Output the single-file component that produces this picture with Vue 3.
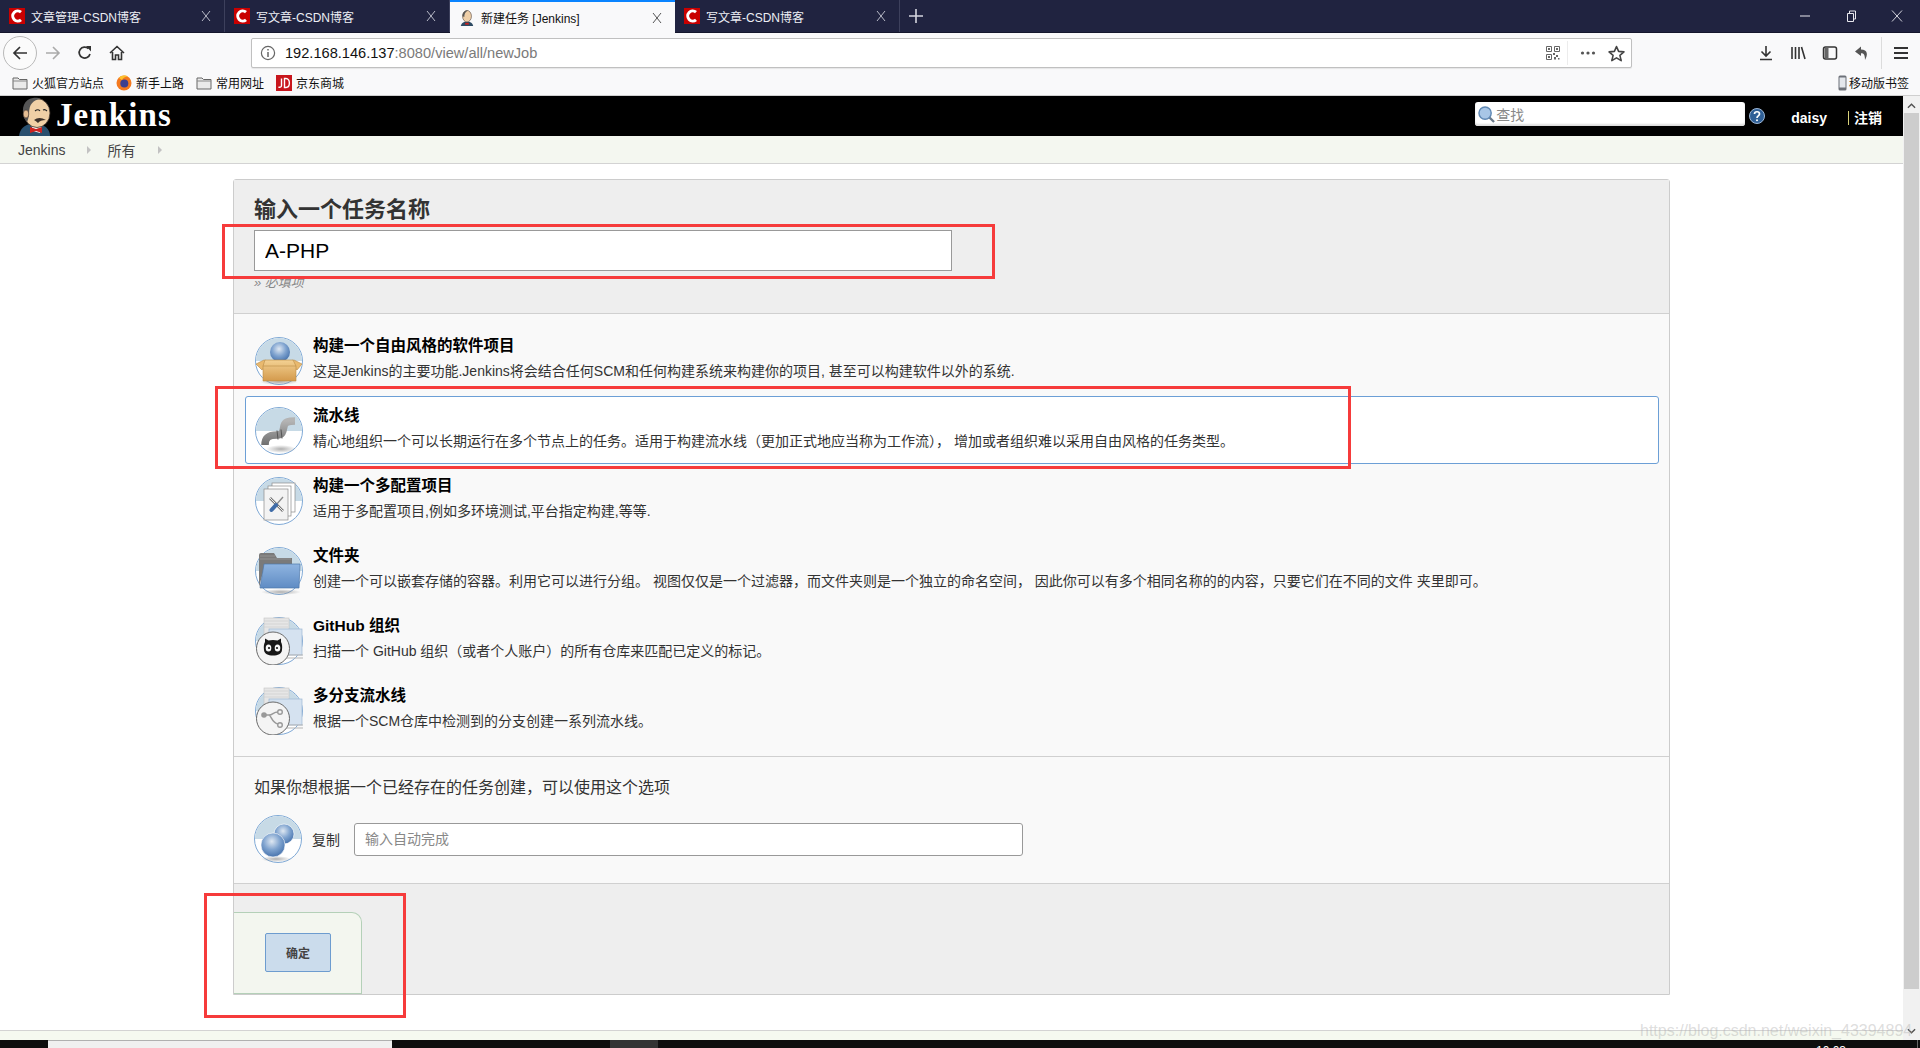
<script setup>
const tabs = [
  { title: "文章管理-CSDN博客", logo: "csdn" },
  { title: "写文章-CSDN博客", logo: "csdn" },
  { title: "新建任务 [Jenkins]", logo: "jenkins", active: true },
  { title: "写文章-CSDN博客", logo: "csdn" },
];

const bookmarks = [
  { label: "火狐官方站点", icon: "folder" },
  { label: "新手上路", icon: "firefox" },
  { label: "常用网址", icon: "folder" },
  { label: "京东商城", icon: "jd" },
];

const jobTypes = [
  {
    icon: "box",
    title: "构建一个自由风格的软件项目",
    desc: "这是Jenkins的主要功能.Jenkins将会结合任何SCM和任何构建系统来构建你的项目, 甚至可以构建软件以外的系统.",
  },
  {
    icon: "pipe",
    title: "流水线",
    desc: "精心地组织一个可以长期运行在多个节点上的任务。适用于构建流水线（更加正式地应当称为工作流）， 增加或者组织难以采用自由风格的任务类型。",
    selected: true,
  },
  {
    icon: "pages",
    title: "构建一个多配置项目",
    desc: "适用于多配置项目,例如多环境测试,平台指定构建,等等.",
  },
  {
    icon: "folder",
    title: "文件夹",
    desc: "创建一个可以嵌套存储的容器。利用它可以进行分组。 视图仅仅是一个过滤器，而文件夹则是一个独立的命名空间， 因此你可以有多个相同名称的的内容，只要它们在不同的文件 夹里即可。",
  },
  {
    icon: "github",
    title: "GitHub 组织",
    desc: "扫描一个 GitHub 组织（或者个人账户）的所有仓库来匹配已定义的标记。",
  },
  {
    icon: "branch",
    title: "多分支流水线",
    desc: "根据一个SCM仓库中检测到的分支创建一系列流水线。",
  },
];
</script>

<template>
  <div class="page">
    <svg class="defs" aria-hidden="true">
      <defs>
        <radialGradient id="ball" cx="45%" cy="35%" r="70%">
          <stop offset="0" stop-color="#dfe8f2" />
          <stop offset="0.5" stop-color="#7fa3cf" />
          <stop offset="1" stop-color="#3f6ca8" />
        </radialGradient>
        <linearGradient id="boxFront" x1="0" y1="0" x2="0" y2="1">
          <stop offset="0" stop-color="#f3d193" />
          <stop offset="1" stop-color="#d49a4c" />
        </linearGradient>
        <linearGradient id="pipeGrey" x1="0" y1="0" x2="0" y2="1">
          <stop offset="0" stop-color="#b4b4b4" />
          <stop offset="1" stop-color="#6f6f6f" />
        </linearGradient>
        <linearGradient id="folderBlue" x1="0" y1="0" x2="0" y2="1">
          <stop offset="0" stop-color="#8fb4e0" />
          <stop offset="1" stop-color="#5f8cc4" />
        </linearGradient>
        <radialGradient id="floorShade" cx="50%" cy="50%" r="50%">
          <stop offset="0" stop-color="#8c8c8c" stop-opacity="0.7" />
          <stop offset="1" stop-color="#8c8c8c" stop-opacity="0" />
        </radialGradient>
      </defs>
    </svg>

    <div class="tabstrip">
      <div
        v-for="(tab, i) in tabs"
        :key="i"
        class="tab"
        :class="{ active: tab.active }"
      >
        <svg v-if="tab.logo === 'csdn'" class="tab-icon" viewBox="0 0 16 16">
          <rect width="16" height="16" fill="#c90000" />
          <path d="M12 4.2 A5 5 0 1 0 12 11.8" fill="none" stroke="#fff" stroke-width="3" />
        </svg>
        <svg v-else class="tab-icon" viewBox="0 0 16 18">
          <path d="M1 18 C2 14 5 13 8 13 C11 13 14 14 15 18 Z" fill="#2d4a63" />
          <ellipse cx="8" cy="7" rx="5" ry="6.5" fill="#efcfa8" stroke="#5a4a40" stroke-width="0.7" />
          <path d="M3 7 C3 2 6 0.5 9 0.5 C7 2 5 3 5 8 Z" fill="#555" />
          <path d="M6 14.5 L10 14.5 L10 16.5 L6 16.5 Z" fill="#c8201c" />
        </svg>
        <span class="tab-title">{{ tab.title }}</span>
        <svg class="tab-close" viewBox="0 0 10 12">
          <path d="M1 1 L9 11 M9 1 L1 11" fill="none" stroke="currentColor" stroke-width="1" />
        </svg>
      </div>
      <svg class="new-tab" viewBox="0 0 14 14">
        <path d="M7 0 V14 M0 7 H14" stroke="#d4d5de" stroke-width="1.6" />
      </svg>
      <div class="window-btns">
        <svg viewBox="0 0 12 12"><path d="M1 6 H11" stroke="#e8e8ee" stroke-width="1" /></svg>
        <svg viewBox="0 0 12 12"><path d="M2.5 3.5 H8.5 V11.5 H2.5 Z M4.5 3.5 V1 H10.5 V9 H8.5" fill="none" stroke="#e8e8ee" stroke-width="1" /></svg>
        <svg viewBox="0 0 12 12"><path d="M1 0.5 L11 11.5 M11 0.5 L1 11.5" fill="none" stroke="#e8e8ee" stroke-width="0.9" /></svg>
      </div>
    </div>

    <div class="toolbar">
      <div class="back-btn">
        <svg viewBox="0 0 16 16" width="16" height="16">
          <path d="M15 8 H2 M8 2 L2 8 L8 14" fill="none" stroke="#333" stroke-width="1.7" />
        </svg>
      </div>
      <div class="tool-btn">
        <svg viewBox="0 0 16 16" width="16" height="16">
          <path d="M1 8 H14 M8 2 L14 8 L8 14" fill="none" stroke="#aaa" stroke-width="1.6" />
        </svg>
      </div>
      <div class="tool-btn">
        <svg viewBox="0 0 16 16" width="16" height="16">
          <path d="M13 9 A5.5 5.5 0 1 1 11.5 3.6" fill="none" stroke="#333" stroke-width="1.7" />
          <path d="M9 1 H14 V6.5 Z" fill="#333" />
        </svg>
      </div>
      <div class="tool-btn">
        <svg viewBox="0 0 16 16" width="16" height="16">
          <path d="M1 8 L8 1.5 L15 8 M3.5 7 V14.5 H6.5 V10 H9.5 V14.5 H12.5 V7" fill="none" stroke="#333" stroke-width="1.6" />
        </svg>
      </div>

      <div class="urlbar">
        <svg class="info-icon" viewBox="0 0 16 16">
          <circle cx="8" cy="8" r="6.6" fill="none" stroke="#666" stroke-width="1.2" />
          <path d="M8 7 V12 M8 4 V5.5" stroke="#666" stroke-width="1.5" />
        </svg>
        <span class="url-text"><span class="url-host">192.168.146.137</span>:8080/view/all/newJob</span>
        <svg class="qr-icon" viewBox="0 0 14 14">
          <path d="M0.5 0.5 H5.5 V5.5 H0.5 Z M8.5 0.5 H13.5 V5.5 H8.5 Z M0.5 8.5 H5.5 V13.5 H0.5 Z" fill="none" stroke="#666" />
          <path d="M2 2 H4 V4 H2 Z M10 2 H12 V4 H10 Z M2 10 H4 V12 H2 Z M7 7 H9 V9 H7 Z M10 9 H12 V11 H10 Z M8 11 H10 V13.5 H8 Z M12 12 H13.5 V13.5 H12 Z" fill="#666" />
        </svg>
        <span class="url-divider"></span>
        <svg class="dots-icon" viewBox="0 0 16 4">
          <circle cx="2.5" cy="2" r="1.6" fill="#555" />
          <circle cx="8" cy="2" r="1.6" fill="#555" />
          <circle cx="13.5" cy="2" r="1.6" fill="#555" />
        </svg>
        <svg class="star-icon" viewBox="0 0 16 16">
          <path d="M8 1.5 L10 6 L15 6.5 L11.2 9.8 L12.4 14.7 L8 12.1 L3.6 14.7 L4.8 9.8 L1 6.5 L6 6 Z" fill="none" stroke="#444" stroke-width="1.5" stroke-linejoin="round" />
        </svg>
      </div>

      <div class="toolbar-right">
        <div class="tool-btn">
          <svg viewBox="0 0 16 16" width="16" height="16">
            <path d="M8 1 V11 M3.5 6.5 L8 11 L12.5 6.5 M2 14.5 H14" fill="none" stroke="#333" stroke-width="1.6" />
          </svg>
        </div>
        <div class="tool-btn">
          <svg viewBox="0 0 16 16" width="16" height="16">
            <path d="M2 2 V14 M5.5 2 V14 M9 2 V14 M11.5 2 L15 14" fill="none" stroke="#333" stroke-width="1.6" />
          </svg>
        </div>
        <div class="tool-btn">
          <svg viewBox="0 0 16 16" width="16" height="16">
            <rect x="1.5" y="2" width="13" height="12" rx="2" fill="none" stroke="#333" stroke-width="1.5" />
            <rect x="2.5" y="3" width="4" height="10" fill="#666" />
          </svg>
        </div>
        <div class="tool-btn">
          <svg viewBox="0 0 16 16" width="16" height="16">
            <path d="M7 1.5 L1 6.5 L7 11 V8.2 C10 8.2 11 10 11 15 C14 10 14 4.5 7 4.5 Z" fill="#555" />
          </svg>
        </div>
        <span class="tool-divider"></span>
        <div class="tool-btn">
          <svg viewBox="0 0 14 14" width="14" height="14">
            <path d="M0 2 H14 M0 7 H14 M0 12 H14" stroke="#333" stroke-width="1.8" />
          </svg>
        </div>
      </div>
    </div>

    <div class="bookmarks">
      <div v-for="b in bookmarks" :key="b.label" class="bookmark">
        <svg v-if="b.icon === 'folder'" class="bm-icon" viewBox="0 0 16 16">
          <path d="M1 3 H6 L7.5 4.5 H15 V14 H1 Z" fill="#eaeaea" stroke="#666" stroke-width="1" />
          <path d="M1 6 H15" stroke="#888" />
        </svg>
        <svg v-else-if="b.icon === 'firefox'" class="bm-icon" viewBox="0 0 16 16">
          <circle cx="8" cy="8" r="7.5" fill="#f4791f" />
          <circle cx="8.3" cy="8.6" r="4" fill="#3c3f90" />
          <path d="M3 3 C5 0 10 0 12 1.5 C9 1.5 7 3 6 5 Z" fill="#fcc32c" />
        </svg>
        <svg v-else class="bm-icon" viewBox="0 0 16 16">
          <rect width="16" height="16" fill="#c8161d" />
          <path d="M5.5 3.5 V10.5 C5.5 12.5 3.5 12.5 2.5 12 M8.5 3.5 V12.5 H10 C14.5 12.5 14.5 3.5 10 3.5 Z" fill="none" stroke="#fff" stroke-width="1.4" />
        </svg>
        <span>{{ b.label }}</span>
      </div>
      <div class="bookmark mobile">
        <svg class="bm-phone" viewBox="0 0 9 16">
          <rect x="0.5" y="0.5" width="8" height="15" rx="1.5" fill="#6d7178" />
          <rect x="1.5" y="2.5" width="6" height="10" fill="#e4e7ec" />
        </svg>
        <span>移动版书签</span>
      </div>
    </div>

    <div class="browser-body">
      <div class="viewport">
        <header class="jenkins-header">
          <svg class="butler" viewBox="0 0 34 40">
            <path d="M1 40 C2 32 7 29 12 28 L26 30 C30 32 32 36 32 40 Z" fill="#29506e" />
            <path d="M13 28 L24 30 L22 37 L15 35 Z" fill="#fff" />
            <path d="M12 31 L18 33 L24 31 L24 37 L18 35 L12 37 Z" fill="#cc2320" />
            <ellipse cx="19" cy="17" rx="13" ry="14.5" fill="#f0d0a6" stroke="#3a2e28" stroke-width="0.8" />
            <path d="M6 22 C3 12 6 3 15 2 C18 1.5 21 2 23 3 C15 4 11 8 11 18 C11 20 10 24 9 26 Z" fill="#555" />
            <ellipse cx="8" cy="18" rx="2.8" ry="4" fill="#e4bd92" stroke="#3a2e28" stroke-width="0.6" />
            <path d="M17 15 Q20 12.5 22 15 M25 14 Q27 13 29 15" fill="none" stroke="#222" stroke-width="1.1" />
            <path d="M16 24 Q21 20 28 24 Q22 24 20 27 Q18 25 16 24 Z" fill="#3b3029" />
          </svg>
          <span class="wordmark">Jenkins</span>
          <div class="header-right">
            <div class="search-box">
              <svg class="search-icon" viewBox="0 0 18 18">
                <path d="M12 12 L17 17" stroke="#6b7a8a" stroke-width="2.4" />
                <circle cx="7.5" cy="7.5" r="6.5" fill="#a8c6e6" stroke="#5f88b4" stroke-width="1.5" />
              </svg>
              <span class="search-placeholder">查找</span>
            </div>
            <svg class="help-icon" viewBox="0 0 16 16">
              <circle cx="8" cy="8" r="7.5" fill="#2f5f96" stroke="#9db7d6" />
              <path d="M5.5 6 C5.5 3 10.5 3 10.5 6 C10.5 8 8 7.8 8 10" fill="none" stroke="#fff" stroke-width="1.7" />
              <circle cx="8" cy="12.3" r="1" fill="#fff" />
            </svg>
            <span class="user-name">daisy</span>
            <span class="logout">注销</span>
          </div>
        </header>

        <nav class="breadcrumb">
          <span>Jenkins</span>
          <i class="crumb-arrow first"></i>
          <span>所有</span>
          <i class="crumb-arrow second"></i>
        </nav>

        <main class="main">
          <section class="panel">
            <div class="name-block">
              <h2 class="name-label">输入一个任务名称</h2>
              <input class="name-input" type="text" value="A-PHP" />
              <div class="name-hint">» 必填项</div>
            </div>

            <ul class="job-list">
              <li
                v-for="job in jobTypes"
                :key="job.icon"
                class="job-item"
                :class="{ selected: job.selected }"
              >
                <svg class="job-icon" viewBox="0 0 48 48">
                  <template v-if="job.icon === 'box'">
                    <circle cx="24" cy="24" r="23.5" fill="#fff" stroke="#7fa9d6" />
                    <path d="M1 24 A23 23 0 0 1 47 24 Z" fill="#c7dae6" />
                    <ellipse cx="24" cy="45" rx="19" ry="3" fill="url(#floorShade)" />
                    <circle cx="25" cy="15" r="10" fill="url(#ball)" />
                    <path d="M9 23 L1 27 L7 33 L14 24 Z M39 23 L47 27 L42 33 L34 24 Z" fill="#e9b96e" stroke="#b98a45" stroke-width="0.6" />
                    <path d="M10 23 H38 L41 29 V44 H8 V29 Z" fill="url(#boxFront)" stroke="#b98a45" stroke-width="0.6" />
                    <path d="M8 29 H41" stroke="#b98a45" stroke-width="0.6" />
                  </template>
                  <template v-else-if="job.icon === 'pipe'">
                    <circle cx="24" cy="24" r="23.5" fill="#fff" stroke="#7fa9d6" />
                    <path d="M1 24 A23 23 0 0 1 47 24 Z" fill="#c7dae6" />
                    <ellipse cx="26" cy="42" rx="15" ry="4" fill="url(#floorShade)" />
                    <path d="M10 38 C10 30 14 28 22 28 C28 28 28 24 29 19 C30 15 33 14 40 14" fill="none" stroke="url(#pipeGrey)" stroke-width="7.5" />
                    <path d="M22 23.5 L23 32.5 M26 22.5 L27 31.5" stroke="#555" stroke-width="1" />
                  </template>
                  <template v-else-if="job.icon === 'pages'">
                    <circle cx="24" cy="24" r="23.5" fill="#fff" stroke="#7fa9d6" />
                    <path d="M1 24 A23 23 0 0 1 47 24 Z" fill="#c7dae6" />
                    <rect x="17" y="6" width="23" height="29" fill="#fff" stroke="#8a8a8a" stroke-width="0.7" />
                    <rect x="13" y="9" width="23" height="30" fill="#fff" stroke="#8a8a8a" stroke-width="0.7" />
                    <rect x="9" y="12" width="24" height="31" fill="#f3f3f3" stroke="#8a8a8a" stroke-width="0.7" />
                    <path d="M15 21 L28 34" stroke="#777" stroke-width="2.6" />
                    <path d="M15 21 L28 34" stroke="#eee" stroke-width="1" />
                    <path d="M28 20 L21 28" stroke="#8a8a8a" stroke-width="1.4" />
                    <path d="M21 28 L16.5 33" stroke="#3f6ca8" stroke-width="4" stroke-linecap="round" />
                  </template>
                  <template v-else-if="job.icon === 'folder'">
                    <circle cx="24" cy="24" r="23.5" fill="#fff" stroke="#7fa9d6" />
                    <path d="M1 24 A23 23 0 0 1 47 24 Z" fill="#c7dae6" />
                    <ellipse cx="26" cy="45" rx="20" ry="3" fill="url(#floorShade)" />
                    <path d="M4 40 V8 Q4 6 6 6 H19 L22 11 H37 V18 H10 Z" fill="#7a7a7a" />
                    <path d="M5 9 H20 M5 12 H36" stroke="#9b9b9b" stroke-width="0.8" />
                    <path d="M9 17 H45 L44 41 H5 Z" fill="url(#folderBlue)" stroke="#4f78ab" stroke-width="0.7" />
                  </template>
                  <template v-else>
                    <circle cx="24" cy="24" r="23.5" fill="#fff" stroke="#7fa9d6" />
                    <path d="M1 24 A23 23 0 0 1 47 24 Z" fill="#c7dae6" />
                    <rect x="9" y="1" width="25" height="22" fill="#e6e6e6" stroke="#c4c4c4" stroke-width="0.6" />
                    <path d="M9 4 H33 M9 7 H33 M9 10 H33" stroke="#cfcfcf" stroke-width="0.8" />
                    <rect x="14" y="12" width="33" height="26" fill="#d5e2f0" stroke="#9db7d3" stroke-width="0.7" />
                    <path d="M30 38 H48 M30 41 H48" stroke="#b5b5b5" stroke-width="1.2" />
                    <circle cx="18" cy="31.5" r="16.5" fill="#f4f4f4" stroke="#6a6a6a" stroke-width="1" />
                    <template v-if="job.icon === 'github'">
                      <path d="M9 33 C8.500 29 9 27 10 25 L10 21.500 L13.500 23.500 C16 22.800 20 22.800 22.500 23.500 L26 21.500 L26 25 C27 27 27.500 29 27 33 C26.500 37 23 38.500 18 38.500 C13 38.500 9.500 37 9 33 Z" fill="#161616" />
                      <ellipse cx="13.500" cy="31" rx="2.800" ry="3.500" fill="#f4f4f4" />
                      <ellipse cx="22.500" cy="31" rx="2.800" ry="3.500" fill="#f4f4f4" />
                      <circle cx="14" cy="31" r="1.100" fill="#161616" />
                      <circle cx="22" cy="31" r="1.100" fill="#161616" />
                    </template>
                    <template v-else>
                      <circle cx="9" cy="28" r="2.800" fill="#999" />
                      <circle cx="25" cy="25" r="2.300" fill="none" stroke="#999" stroke-width="1.400" />
                      <circle cx="25" cy="38" r="2.300" fill="none" stroke="#999" stroke-width="1.400" />
                      <path d="M9 28 H14 C18 28 18 25 23 25 M14 28 C17 30 17 36 23 37" fill="none" stroke="#999" stroke-width="1.500" />
                    </template>
                  </template>
                </svg>
                <div class="job-text">
                  <div class="job-title">{{ job.title }}</div>
                  <div class="job-desc">{{ job.desc }}</div>
                </div>
              </li>
            </ul>

            <div class="copy-block">
              <div class="copy-hint">如果你想根据一个已经存在的任务创建，可以使用这个选项</div>
              <div class="copy-row">
                <svg class="job-icon" viewBox="0 0 48 48">
                  <circle cx="24" cy="24" r="23.5" fill="#fff" stroke="#7fa9d6" />
                  <path d="M1 24 A23 23 0 0 1 47 24 Z" fill="#c7dae6" />
                  <ellipse cx="22" cy="44" rx="15" ry="3" fill="url(#floorShade)" />
                  <circle cx="30" cy="19" r="10" fill="url(#ball)" stroke="#fff" stroke-width="0.6" />
                  <circle cx="19" cy="30" r="12" fill="url(#ball)" stroke="#fff" stroke-width="0.6" />
                </svg>
                <span class="copy-label">复制</span>
                <input class="copy-input" type="text" placeholder="输入自动完成" />
              </div>
            </div>

            <div class="footer-block">
              <div class="ok-tab">
                <button class="ok-btn" type="button">确定</button>
              </div>
            </div>
          </section>
        </main>

        <footer class="page-footer"></footer>
      </div>

      <aside class="scrollbar">
        <svg class="scroll-arrow" viewBox="0 0 10 6">
          <path d="M1 5 L5 1 L9 5" fill="none" stroke="#505050" stroke-width="1.5" />
        </svg>
        <div class="scroll-thumb"></div>
        <svg class="scroll-arrow down" viewBox="0 0 10 6">
          <path d="M1 1 L5 5 L9 1" fill="none" stroke="#505050" stroke-width="1.5" />
        </svg>
      </aside>
    </div>

    <div class="taskbar">
      <div class="task-search"></div>
      <div class="task-item"></div>
      <span class="task-clock">10:03</span>
      <span class="task-edge"></span>
    </div>

    <!-- hand drawn annotations sitting on top of the screenshot -->
    <div class="mark mark-name"></div>
    <div class="mark mark-pipeline"></div>
    <div class="mark mark-ok"></div>
    <div class="watermark">https://blog.csdn.net/weixin_43394894</div>
  </div>
</template>

<style>
html,
body {
  margin: 0;
  overflow: hidden;
}
</style>

<style scoped>
* {
  box-sizing: border-box;
}

.page {
  position: relative;
  display: flex;
  flex-direction: column;
  width: 1920px;
  height: 1048px;
  overflow: hidden;
  background: #fff;
  font-family: "Liberation Sans", "Noto Sans CJK SC", sans-serif;
  color: #333;
}

.defs {
  position: absolute;
  width: 0;
  height: 0;
}

/* browser chrome */
.tabstrip {
  display: flex;
  align-items: stretch;
  flex: none;
  height: 33px;
  background: #202340;
  border-bottom: 1px solid #14162c;
}

.tab {
  display: flex;
  align-items: center;
  width: 225px;
  padding: 0 10px 0 9px;
  border-right: 1px solid #3d405c;
  color: #eceef4;
  font-size: 12px;
}

.tab.active {
  height: 33px;
  background: #f9f9fa;
  border-top: 2px solid #0a84ff;
  border-right: none;
  color: #111;
}

.tab-icon {
  flex: none;
  width: 16px;
  height: 16px;
}

.tab-title {
  flex: 1;
  margin-left: 6px;
}

.tab-close {
  flex: none;
  width: 10px;
  height: 12px;
  margin-right: 3px;
  color: #b9bbc8;
}

.tab.active .tab-close {
  color: #555;
}

.new-tab {
  width: 14px;
  height: 14px;
  margin: 9px 0 0 9px;
}

.window-btns {
  display: flex;
  gap: 34px;
  align-items: center;
  margin-left: auto;
  padding-right: 17px;
}

.window-btns svg {
  width: 12px;
  height: 12px;
}

.toolbar {
  display: flex;
  align-items: center;
  flex: none;
  height: 37px;
  padding: 3px 0 0 3px;
  background: #f9f9fa;
}

.back-btn {
  display: flex;
  align-items: center;
  justify-content: center;
  width: 34px;
  height: 34px;
  background: #fbfbfb;
  border: 1px solid #b9b9b9;
  border-radius: 50%;
}

.tool-btn {
  display: flex;
  align-items: center;
  justify-content: center;
  flex: none;
  width: 32px;
  height: 32px;
}

.urlbar {
  display: flex;
  align-items: center;
  width: 1381px;
  height: 30px;
  margin-left: 118px;
  padding: 0 6px 0 8px;
  background: #fff;
  border: 1px solid #c0c0c0;
  border-radius: 2px;
  box-shadow: 0 1px 1px rgba(0, 0, 0, 0.08);
}

.info-icon {
  width: 16px;
  height: 16px;
}

.url-text {
  margin-left: 9px;
  color: #7a7a7a;
  font-size: 14.6px;
}

.url-host {
  color: #111;
}

.qr-icon {
  width: 14px;
  height: 14px;
  margin-left: auto;
}

.url-divider {
  width: 1px;
  height: 24px;
  margin-left: 7px;
  background: #ececec;
}

.dots-icon {
  width: 16px;
  height: 4px;
  margin-left: 12px;
}

.star-icon {
  width: 17px;
  height: 17px;
  margin-left: 12px;
}

.toolbar-right {
  display: flex;
  align-items: center;
  margin-left: 118px;
}

.tool-divider {
  width: 1px;
  height: 32px;
  margin: 0 3px;
  background: #dcdcdc;
}

.bookmarks {
  display: flex;
  align-items: center;
  flex: none;
  gap: 12px;
  height: 26px;
  padding: 0 11px 0 12px;
  background: #f9f9fa;
  border-bottom: 1px solid #cfcfcf;
  color: #111;
  font-size: 12px;
}

.bookmark {
  display: flex;
  align-items: center;
  gap: 4px;
}

.bookmark.mobile {
  margin-left: auto;
  gap: 2px;
}

.bm-icon {
  width: 16px;
  height: 16px;
}

.bm-phone {
  width: 9px;
  height: 16px;
}

.browser-body {
  display: flex;
  flex: 1;
  min-height: 0;
}

.viewport {
  display: flex;
  flex-direction: column;
  flex: 1;
  min-width: 0;
}

/* jenkins header */
.jenkins-header {
  display: flex;
  align-items: center;
  flex: none;
  height: 40px;
  padding-left: 18px;
  background: #000;
  color: #fff;
}

.butler {
  flex: none;
  width: 34px;
  height: 40px;
}

.wordmark {
  margin: 0 0 2px 4px;
  font-family: "Liberation Serif", serif;
  font-size: 33px;
  font-weight: 700;
  letter-spacing: 1.1px;
}

.header-right {
  display: flex;
  align-items: center;
  margin-left: auto;
  padding-right: 21px;
}

.search-box {
  display: flex;
  align-items: center;
  width: 270px;
  height: 24px;
  margin-bottom: 4px;
  padding-left: 3px;
  background: #fff;
  border-radius: 3px;
  box-shadow: inset 0 -2px 2px #ddd;
}

.search-icon {
  width: 17px;
  height: 17px;
}

.search-placeholder {
  margin-left: 1px;
  color: #888;
  font-size: 14px;
}

.help-icon {
  width: 16px;
  height: 16px;
  margin-left: 4px;
}

.user-name {
  margin: 4px 0 0 26px;
  font-size: 14px;
  font-weight: 700;
}

.logout {
  margin: 4px 0 0 21px;
  padding-left: 5px;
  border-left: 1px solid #d8d27a;
  font-size: 14px;
  font-weight: 700;
  line-height: 14px;
}

.breadcrumb {
  display: flex;
  align-items: center;
  flex: none;
  height: 28px;
  padding-left: 18px;
  background: #f4f7f0;
  border-bottom: 1px solid #d3d3d3;
  color: #444;
  font-size: 14px;
}

.crumb-arrow {
  width: 0;
  height: 0;
  border-top: 4px solid transparent;
  border-bottom: 4px solid transparent;
  border-left: 4px solid #c2c2c2;
}

.crumb-arrow.first {
  margin: 0 16px 0 22px;
}

.crumb-arrow.second {
  margin-left: 23px;
}

/* new job form */
.main {
  flex: 1;
  min-height: 0;
  padding: 15px 0 0 233px;
}

.panel {
  width: 1437px;
  background: #f9f9f9;
  border: 1px solid #ccc;
  border-radius: 3px 3px 0 0;
}

.name-block {
  height: 134px;
  padding: 16px 20px 0;
  background: #eee;
  border-bottom: 1px solid #d0d0d0;
}

.name-label {
  margin: 0;
  color: #333;
  font-size: 22px;
  font-weight: 700;
  line-height: 28px;
}

.name-input {
  display: block;
  width: 698px;
  height: 41px;
  margin-top: 6px;
  padding: 0 10px;
  background: #fff;
  border: 1px solid #999;
  border-radius: 0;
  color: #000;
  font-family: inherit;
  font-size: 21px;
}

.name-hint {
  margin-top: 4px;
  color: #888;
  font-size: 13px;
  font-style: italic;
  line-height: 16px;
}

.job-list {
  margin: 0;
  padding: 12px 10px 10px 11px;
  list-style: none;
  border-bottom: 1px solid #d0d0d0;
}

.job-item {
  display: flex;
  gap: 10px;
  height: 68px;
  margin-bottom: 2px;
  padding: 10px 9px 0;
  border: 1px solid transparent;
  border-radius: 3px;
}

.job-item.selected {
  background: #fff;
  border-color: #6c9fd6;
}

.job-icon {
  flex: none;
  width: 48px;
  height: 48px;
}

.job-title {
  margin-top: -1px;
  color: #000;
  font-size: 15.5px;
  font-weight: 700;
  line-height: 20px;
}

.job-desc {
  margin-top: 5px;
  color: #333;
  font-size: 14px;
  line-height: 20px;
}

.copy-block {
  height: 127px;
  padding: 21px 20px 0;
  border-bottom: 1px solid #d0d0d0;
}

.copy-hint {
  color: #333;
  font-size: 16px;
  line-height: 20px;
}

.copy-row {
  display: flex;
  align-items: center;
  margin-top: 17px;
}

.copy-label {
  margin-left: 10px;
  font-size: 14px;
}

.copy-input {
  width: 669px;
  height: 33px;
  margin-left: 14px;
  padding: 0 10px;
  background: #fff;
  border: 1px solid #999;
  border-radius: 3px;
  font-family: inherit;
  font-size: 14px;
}

.copy-input::placeholder {
  color: #888;
}

.footer-block {
  display: flex;
  align-items: flex-end;
  height: 110px;
  background: #eee;
}

.ok-tab {
  width: 128px;
  height: 82px;
  padding: 20px 0 0 31px;
  background: #f3f6ef;
  border: 1px solid #b4d0b8;
  border-left: none;
  border-radius: 0 10px 0 0;
}

.ok-btn {
  display: block;
  width: 66px;
  height: 39px;
  padding: 0;
  background: #cbdcec;
  border: 1px solid #6d9ccf;
  border-radius: 2px;
  color: #444;
  font-family: inherit;
  font-size: 12px;
  font-weight: 700;
}

.page-footer {
  flex: none;
  height: 10px;
  background: #f5f9f0;
  border-top: 1px solid #d3d3d3;
}

.scrollbar {
  position: relative;
  flex: none;
  width: 17px;
  padding-top: 17px;
  background: #f1f1f1;
}

.scroll-arrow {
  position: absolute;
  top: 7px;
  left: 4px;
  width: 9px;
  height: 6px;
}

.scroll-arrow.down {
  top: auto;
  bottom: 6px;
}

.scroll-thumb {
  height: 876px;
  margin: 0 1px;
  background: #cdcdcd;
}

.taskbar {
  display: flex;
  position: relative;
  flex: none;
  height: 8px;
  padding-left: 48px;
  background: #0e0e0e;
  overflow: hidden;
}

.task-search {
  width: 344px;
  background: #f0f0f0;
  border-top: 1px solid #b0b0b0;
}

.task-item {
  width: 48px;
  margin-left: 218px;
  background: #333;
}

.task-clock {
  position: absolute;
  top: 4px;
  left: 1816px;
  color: #fff;
  font-size: 12px;
  line-height: 14px;
}

.task-edge {
  position: absolute;
  top: 0;
  right: 2px;
  width: 1px;
  height: 8px;
  background: #666;
}

/* red annotation boxes */
.mark {
  position: absolute;
  border: 3px solid #f63b3b;
  pointer-events: none;
}

.mark-name {
  top: 224px;
  left: 222px;
  width: 773px;
  height: 55px;
}

.mark-pipeline {
  top: 386px;
  left: 215px;
  width: 1136px;
  height: 83px;
}

.mark-ok {
  top: 893px;
  left: 204px;
  width: 202px;
  height: 125px;
}

.watermark {
  position: absolute;
  top: 1021px;
  left: 1640px;
  color: rgba(170, 170, 170, 0.4);
  font-size: 16px;
  line-height: 20px;
  pointer-events: none;
}
</style>
